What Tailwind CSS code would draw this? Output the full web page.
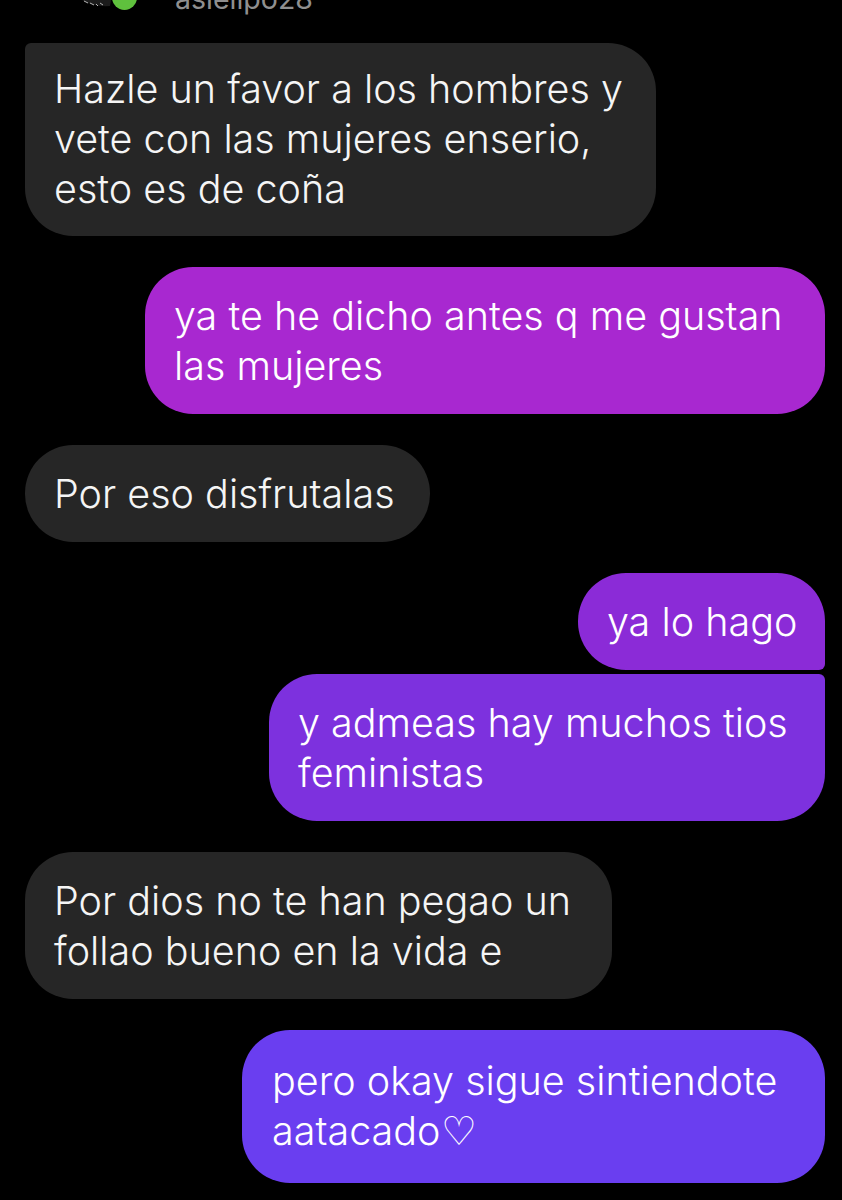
<!DOCTYPE html>
<html lang="en">
<head>
  <meta charset="UTF-8" />
  <title>Chat</title>
  <script src="https://cdn.jsdelivr.net/npm/@tailwindcss/browser@4"></script>
</head>
<body class="bg-black">
  <div class="w-[842px] h-[1200px] overflow-hidden bg-black font-['Inter',sans-serif] font-[350] text-[39.5px] leading-[50px] text-[#f5f5f5] whitespace-nowrap">

    <!-- Cut off header -->
    <div class="h-[43px] overflow-hidden">
      <div class="flex items-end h-[10px] pl-[80px]">
        <svg class="w-[31px] h-[7px] mb-[3px]" viewBox="0 0 31 7">
          <path d="M2 0 Q12 7 30 6 L31 0 Z" fill="#1c1c1c"/>
          <path d="M4 1 L8 3 M10 3 L14 5 M16 4 L18 6 M20 3 L23 5" stroke="#b5b5b5" stroke-width="1" fill="none"/>
        </svg>
        <div class="w-[25px] h-[25px] shrink-0 rounded-full bg-[#5fc13d] ml-[1px]"></div>
        <span class="ml-[38px] mb-[-4px] text-[28.5px] leading-[30px] font-normal text-[#8f8f8f]">asielipo28</span>
      </div>
    </div>

    <div class="flex flex-col px-[17px]">
      <div class="self-start w-[631px] h-[193px] ml-[8px] px-[29px] py-[21px] rounded-[48px] rounded-tl-[6px] bg-[#262626]">
        Hazle un favor a los hombres y<br>vete con las mujeres enserio,<br>esto es de coña
      </div>

      <div class="self-end w-[680px] h-[147px] mt-[31px] px-[29px] py-[24px] rounded-[48px] bg-[#a828d0] text-white">
        ya te he dicho antes q me gustan<br>las mujeres
      </div>

      <div class="self-start w-[405px] h-[97px] ml-[8px] mt-[31px] px-[29px] py-[24px] rounded-[48px] bg-[#262626]">
        Por eso disfrutalas
      </div>

      <div class="self-end w-[247px] h-[97px] mt-[31px] px-[29px] py-[24px] rounded-[48px] rounded-br-[6px] bg-[#8b2bd7] text-white">
        ya lo hago
      </div>

      <div class="self-end w-[556px] h-[147px] mt-[4px] px-[29px] py-[24px] rounded-[48px] rounded-tr-[6px] bg-[#7d31de] text-white">
        y admeas hay muchos tios<br>feministas
      </div>

      <div class="self-start w-[587px] h-[147px] ml-[8px] mt-[31px] px-[29px] py-[24px] rounded-[48px] bg-[#262626]">
        Por dios no te han pegao un<br>follao bueno en la vida e
      </div>

      <div class="self-end w-[583px] h-[153px] mt-[31px] px-[30px] py-[26px] rounded-[48px] bg-[#6a3ef0] text-white">
        pero okay sigue sintiendote<br>aatacado<span class="font-['DejaVu_Sans']">♡</span>
      </div>
    </div>
  </div>
</body>
</html>
